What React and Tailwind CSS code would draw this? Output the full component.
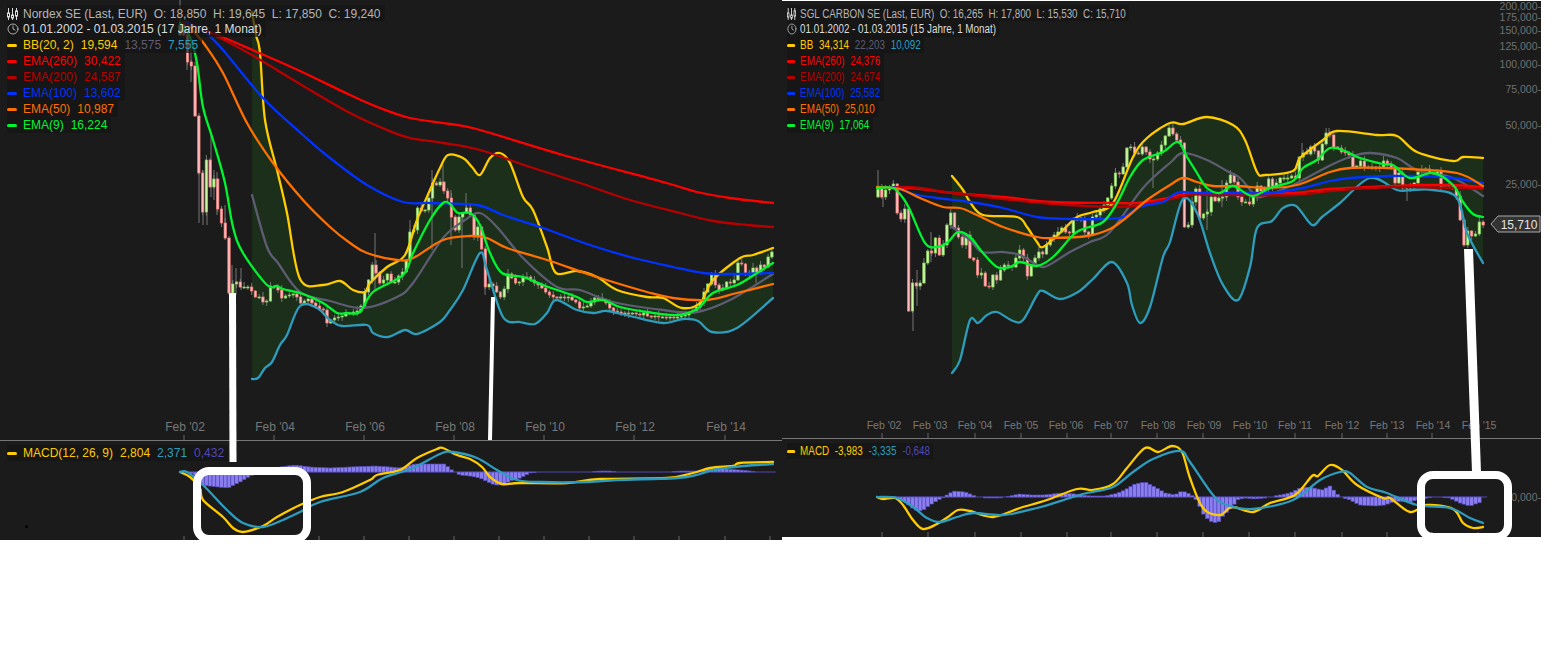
import React from "react";
import { Clock } from "lucide-react";

const YELLOW = "#ffcc00";
const TEAL = "#2e9dbd";
const GRAY = "#5f5b72";
const RED = "#ff0000";
const DARK_RED = "#b80000";
const BLUE = "#0033ff";
const ORANGE = "#ff7000";
const GREEN = "#00f530";

// Nordex, all coordinates are page pixels
const left = {
  upper: [252,12, 256,35, 260,53, 265,120, 277,170, 287,213, 300,279, 323,285, 340,281, 353,290, 365,292, 370,283, 387,267, 405,255, 417,220, 430,190, 440,168, 448,155, 463,158, 472,167, 480,175, 490,158, 500,153, 510,163, 523,197, 533,210, 547,247, 556,273, 577,271, 597,277, 617,290, 647,297, 663,298, 682,308, 700,303, 713,280, 740,258, 753,255, 773,248],
  mid: [252,195, 267,247, 278,263, 300,292, 330,301, 363,308, 397,297, 413,283, 443,238, 465,220, 480,213, 497,227, 523,258, 557,287, 580,290, 613,302, 663,310, 697,312, 730,300, 773,274],
  lower: [252,379, 258,378, 265,368, 272,362, 280,345, 287,335, 300,306, 317,308, 330,320, 342,326, 367,325, 373,333, 388,337, 405,330, 417,334, 440,322, 450,310, 463,290, 480,253, 487,270, 503,317, 520,322, 535,324, 547,313, 556,300, 577,310, 593,313, 607,311, 630,316, 663,323, 683,319, 698,321, 712,332, 737,328, 773,298],
  ema260: [183,22, 220,36, 257,52, 300,71, 350,95, 380,108, 410,118, 450,124, 480,130, 563,155, 663,182, 697,192, 730,198, 773,203],
  ema200: [183,22, 220,38, 257,58, 300,84, 350,113, 387,130, 410,138, 443,143, 480,150, 530,167, 580,183, 630,200, 680,213, 713,221, 747,225, 773,227],
  ema100: [186,22, 205,32, 223,50, 263,98, 303,135, 330,158, 367,185, 403,202, 430,203, 477,205, 503,215, 540,227, 590,245, 630,257, 673,267, 703,273, 730,274, 773,273],
  ema50: [190,27, 205,45, 223,73, 247,123, 273,163, 303,200, 330,227, 350,243, 367,253, 397,260, 413,258, 443,240, 470,236, 487,238, 507,248, 547,260, 597,277, 647,292, 673,298, 707,300, 737,293, 773,284],
  ema9: [180,23, 190,37, 197,63, 203,107, 213,140, 225,183, 233,227, 243,253, 267,285, 277,286, 283,289, 303,294, 323,303, 337,313, 347,313, 360,312, 373,292, 403,275, 413,253, 430,220, 443,203, 450,204, 458,213, 470,213, 480,225, 490,253, 502,273, 523,277, 543,285, 577,297, 587,302, 603,300, 620,307, 647,312, 677,315, 697,309, 713,293, 737,285, 757,273, 773,263],
  closes: [25,35,62,66,116,173,212,160,187,179,209,223,238,293,284,282,287,287,287,291,297,297,302,301,286,287,290,298,296,295,294,297,303,301,299,303,306,309,310,323,320,318,317,316,313,313,312,311,306,292,280,265,273,283,280,274,282,282,276,272,260,232,230,208,211,210,198,183,185,182,191,198,217,230,217,213,208,215,237,227,249,287,284,286,292,297,289,274,278,283,282,277,277,280,283,285,288,292,295,297,298,297,298,297,300,302,308,307,306,302,298,298,300,303,308,311,312,314,313,314,313,314,315,313,316,317,316,317,317,318,317,318,317,316,315,313,311,307,302,292,284,275,285,290,288,282,283,280,263,264,273,273,268,272,265,267,257,252],
  wicks: [[180,0,36],[187,30,70],[191,40,82],[199,113,223],[203,170,225],[207,160,225],[211,135,197],[214,170,200],[217,172,215],[225,205,240],[232,265,300],[236,268,295],[241,268,290],[375,233,290],[410,220,243],[432,170,250],[443,165,190],[451,190,245],[462,213,268],[466,193,210],[485,248,295],[756,268,283]],
  macdFast: [180,472, 190,477, 200,488, 203,500, 223,517, 233,528, 243,532, 263,526, 277,517, 300,505, 320,497, 343,492, 370,480, 377,475, 400,470, 417,458, 437,449, 443,448, 457,455, 470,459, 482,467, 490,477, 502,484, 520,483, 567,483, 600,479, 667,478, 693,473, 710,468, 733,466, 740,463, 773,462],
  macdSlow: [180,472, 187,472, 203,485, 227,510, 243,523, 263,527, 283,520, 300,512, 320,502, 360,492, 383,478, 413,468, 440,454, 453,452, 477,458, 497,470, 517,480, 540,482, 587,482, 617,480, 677,478, 700,474, 713,470, 743,466, 773,464],
  hist: [[180,0],[190,-1],[197,-4],[200,-13],[228,-16],[240,-10],[250,-4],[262,0],[270,3],[280,5],[295,7],[310,5],[330,4],[350,5],[375,6],[390,5],[400,4],[415,8],[445,8],[450,3],[455,0],[460,-3],[470,-4],[480,-6],[490,-11],[495,-13],[503,-13],[510,-9],[520,-6],[530,-1],[540,0],[585,0],[600,1],[610,1],[620,0],[665,0],[680,1],[700,1],[713,4],[725,3],[740,2],[750,1],[760,0],[775,0]],
};

// SGL Carbon
const right = {
  upper: [952,176, 963,190, 970,202, 983,215, 1017,217, 1027,227, 1037,242, 1043,247, 1060,233, 1077,217, 1093,212, 1113,203, 1133,157, 1147,138, 1170,123, 1183,124, 1207,117, 1233,125, 1245,140, 1257,172, 1265,175, 1293,171, 1300,158, 1323,140, 1337,131, 1377,135, 1397,136, 1417,152, 1453,161, 1463,157, 1483,158],
  mid: [952,227, 970,240, 982,252, 1003,252, 1020,255, 1037,265, 1047,266, 1070,252, 1090,242, 1110,232, 1143,188, 1170,163, 1183,153, 1207,160, 1227,171, 1240,178, 1253,193, 1260,197, 1293,185, 1327,167, 1350,157, 1370,153, 1397,158, 1417,170, 1453,178, 1483,196],
  lower: [952,373, 960,360, 970,320, 978,323, 987,315, 997,312, 1013,321, 1023,320, 1037,295, 1043,291, 1060,299, 1078,292, 1093,279, 1112,262, 1127,283, 1132,305, 1140,323, 1150,307, 1163,257, 1170,242, 1183,199, 1197,213, 1210,253, 1223,285, 1238,300, 1250,267, 1257,228, 1272,221, 1283,208, 1296,206, 1312,225, 1322,217, 1340,203, 1370,178, 1397,190, 1410,190, 1433,190, 1457,198, 1467,233, 1483,263],
  ema260: [877,188, 910,188, 953,193, 1003,197, 1053,202, 1117,203, 1137,203, 1163,199, 1187,194, 1213,193, 1253,193, 1293,193, 1330,189, 1370,187, 1420,185, 1453,185, 1483,187],
  ema200: [877,188, 910,187, 953,193, 1003,199, 1053,204, 1117,207, 1147,204, 1190,195, 1213,195, 1293,195, 1330,191, 1370,188, 1420,187, 1483,189],
  ema100: [877,187, 897,188, 913,194, 937,198, 970,202, 1003,208, 1037,217, 1070,219, 1103,219, 1123,217, 1140,207, 1163,202, 1170,197, 1180,192, 1200,193, 1237,193, 1270,193, 1303,188, 1330,181, 1350,178, 1387,176, 1420,176, 1453,178, 1483,183],
  ema50: [877,187, 900,189, 920,198, 943,207, 960,208, 977,215, 1003,227, 1037,237, 1053,238, 1087,236, 1110,229, 1127,217, 1147,200, 1170,185, 1183,178, 1197,182, 1213,186, 1237,186, 1267,188, 1297,185, 1330,172, 1350,168, 1387,168, 1410,169, 1457,173, 1483,186],
  ema9: [877,188, 893,188, 903,198, 910,210, 925,243, 937,247, 948,242, 958,232, 970,237, 983,253, 997,267, 1010,267, 1020,262, 1037,266, 1053,257, 1073,235, 1083,229, 1103,222, 1117,203, 1130,177, 1143,160, 1163,152, 1178,142, 1187,157, 1197,173, 1207,188, 1220,193, 1233,186, 1252,196, 1270,188, 1293,181, 1303,168, 1317,160, 1330,148, 1345,151, 1360,158, 1383,164, 1393,165, 1410,178, 1433,173, 1453,185, 1463,202, 1473,214, 1483,217],
  closes: [187,197,190,187,184,213,219,209,311,283,286,283,263,251,253,238,255,245,225,213,228,237,245,235,258,260,275,273,286,287,275,280,270,265,266,267,258,250,258,276,265,258,252,254,245,239,235,232,228,232,233,220,218,220,232,235,217,215,209,205,198,186,173,174,167,148,147,153,154,147,152,159,159,153,145,136,128,134,140,143,227,225,202,189,218,214,212,197,201,198,197,183,175,182,197,202,202,204,197,186,191,189,179,187,183,178,178,178,176,178,157,153,154,147,151,160,144,133,135,147,148,152,153,155,167,166,161,167,168,167,168,167,161,165,167,183,173,188,187,188,183,172,170,169,173,174,172,188,187,187,187,196,220,245,231,236,234,222,225],
  wicks: [[878,170,193],[883,197,207],[913,283,331],[917,270,306],[931,232,262],[1153,160,188],[1207,190,230],[1222,180,207],[1302,143,157],[1329,128,137],[1407,187,201]],
  macdFast: [877,497, 883,499, 895,498, 903,505, 913,520, 923,529, 937,524, 948,517, 958,510, 970,511, 993,517, 1020,508, 1047,500, 1077,489, 1093,490, 1113,484, 1127,468, 1145,448, 1158,452, 1172,446, 1182,452, 1190,478, 1203,508, 1220,515, 1232,507, 1253,512, 1270,503, 1295,495, 1312,476, 1318,476, 1330,465, 1342,470, 1357,485, 1383,498, 1390,498, 1410,512, 1427,505, 1453,509, 1463,523, 1473,528, 1483,527],
  macdSlow: [877,497, 897,498, 913,507, 927,518, 940,522, 957,517, 973,513, 1003,515, 1037,508, 1070,498, 1087,493, 1113,487, 1133,472, 1153,459, 1180,451, 1190,462, 1213,495, 1227,505, 1253,509, 1293,500, 1320,480, 1340,472, 1350,473, 1367,487, 1387,493, 1417,505, 1450,508, 1470,518, 1483,523],
  hist: [[877,0],[895,0],[900,-3],[905,-5],[915,-13],[922,-14],[930,-8],[940,-2],[945,0],[948,3],[955,6],[965,5],[975,1],[985,-1],[1000,-1],[1010,1],[1020,3],[1030,2],[1045,2],[1060,4],[1075,3],[1090,1],[1105,1],[1115,3],[1125,7],[1135,13],[1145,15],[1155,10],[1165,4],[1175,2],[1182,6],[1190,3],[1195,-1],[1200,-10],[1205,-20],[1212,-25],[1218,-26],[1222,-20],[1228,-14],[1233,-9],[1237,-3],[1245,-1],[1255,-2],[1265,-1],[1275,1],[1290,4],[1300,9],[1310,10],[1322,7],[1330,11],[1340,0],[1350,-3],[1360,-8],[1375,-9],[1385,-8],[1395,-4],[1410,-5],[1420,-2],[1435,0],[1450,-1],[1460,-6],[1470,-9],[1478,-6],[1483,-5]],
};

const reversePairs = (flat) => {
  const out = [];
  for (let i = flat.length - 2; i >= 0; i -= 2) out.push(flat[i], flat[i + 1]);
  return out;
};

// catmull-rom through the traced points, so the curves don't look polygonal
const smoothPath = (flat, moveTo = true) => {
  const pts = [];
  for (let i = 0; i < flat.length; i += 2) pts.push([flat[i], flat[i + 1]]);
  let d = moveTo ? `M${pts[0][0]} ${pts[0][1]}` : `L${pts[0][0]} ${pts[0][1]}`;
  for (let i = 0; i < pts.length - 1; i++) {
    const p0 = pts[i - 1] || pts[i];
    const p1 = pts[i];
    const p2 = pts[i + 1];
    const p3 = pts[i + 2] || p2;
    const c1x = p1[0] + (p2[0] - p0[0]) / 6;
    const c1y = p1[1] + (p2[1] - p0[1]) / 6;
    const c2x = p2[0] - (p3[0] - p1[0]) / 6;
    const c2y = p2[1] - (p3[1] - p1[1]) / 6;
    d += ` C${c1x.toFixed(1)} ${c1y.toFixed(1)} ${c2x.toFixed(1)} ${c2y.toFixed(1)} ${p2[0]} ${p2[1]}`;
  }
  return d;
};

const interp = (anchors, x) => {
  for (let i = 1; i < anchors.length; i++) {
    if (x <= anchors[i][0]) {
      const [x0, y0] = anchors[i - 1];
      const [x1, y1] = anchors[i];
      return y0 + ((y1 - y0) * (x - x0)) / (x1 - x0);
    }
  }
  return 0;
};

const Line = ({ data, color, width = 2.3 }) => (
  <path d={smoothPath(data)} fill="none" stroke={color} strokeWidth={width} strokeLinejoin="round" strokeLinecap="round" />
);

const Candles = ({ closes, wicks, start, step }) => (
  <g>
    {wicks.map(([x, y1, y2]) => (
      <line key={`${x}-${y1}`} x1={x} x2={x} y1={y1} y2={y2} stroke="#777" />
    ))}
    {closes.map((close, i) => {
      const x = start + step * i;
      const open = i === 0 ? close + 10 : closes[i - 1];
      const top = Math.min(open, close);
      const bottom = Math.max(open, close);
      const up = close <= open;
      return (
        <g key={i}>
          <line x1={x} x2={x} y1={top - 1 - ((i * 37) % 5)} y2={bottom + 1 + ((i * 53) % 4)} stroke="#777" />
          <rect
            x={x - 1.2}
            y={top}
            width={2.4}
            height={Math.max(bottom - top, 1)}
            fill={up ? "#c8f7a4" : "#ffbcbc"}
            stroke={up ? "#86cf5c" : "#f07878"}
            strokeWidth={0.7}
          />
        </g>
      );
    })}
  </g>
);

const CandleIcon = () => (
  <svg width="11" height="12" viewBox="0 0 11 12" fill="none" stroke="#ddd" strokeWidth="1">
    <path d="M1.5 0v12M5.5 0v12M9.5 0v12" />
    <rect x="0.5" y="5" width="2" height="4" fill="#1b1b1b" />
    <rect x="4.5" y="7" width="2" height="3" fill="#1b1b1b" />
    <rect x="8.5" y="3" width="2" height="5" fill="#1b1b1b" />
  </svg>
);

const Row = ({ color, values }) => (
  <div className="flex h-4 w-fit items-center gap-[7px] bg-[#141414]/70 pr-1 text-[12px] leading-4">
    <span className="mr-[-1px] h-[3px] w-[10px] rounded-sm" style={{ backgroundColor: color }} />
    {values.map(([text, c]) => (
      <span key={text} className="whitespace-pre" style={{ color: c }}>
        {text}
      </span>
    ))}
  </div>
);

const Legend = ({ title, range, rows, className }) => (
  <div className={`absolute flex flex-col ${className}`}>
    <div className="flex h-4 w-fit items-center gap-[5px] bg-[#141414]/70 pr-1 pt-[2px] text-[12px] text-[#b5b5b5]">
      <CandleIcon />
      <span className="whitespace-pre">{title}</span>
    </div>
    <div className="flex h-4 w-fit items-center gap-[4px] bg-[#141414]/70 pr-1 text-[12px] text-[#dddddd]">
      <Clock size={12} strokeWidth={1.5} />
      <span className="whitespace-pre">{range}</span>
    </div>
    {rows.map((row) => (
      <Row
        key={row.name}
        color={row.color}
        values={[[row.name, row.color], ...row.values.map((v, i) => [v, row.colors ? row.colors[i] : row.color])]}
      />
    ))}
  </div>
);

const AxisLabels = ({ labels, y, className }) =>
  labels.map(([text, x]) => (
    <text key={text} x={x} y={y} textAnchor="middle" className={`fill-[#777777] ${className}`}>
      {text}
    </text>
  ));

const Ticks = ({ xs, y1, y2 }) => xs.map((x) => <line key={x} x1={x} x2={x} y1={y1} y2={y2} stroke="#666" />);

const MainChart = ({ data, start, step }) => (
  <g>
    <path d={`${smoothPath(data.upper)} ${smoothPath(reversePairs(data.lower), false)} Z`} fill="#1b2f1a" />
    <Candles closes={data.closes} wicks={data.wicks} start={start} step={step} />
    <Line data={data.mid} color={GRAY} />
    <Line data={data.lower} color={TEAL} />
    <Line data={data.upper} color={YELLOW} />
    <Line data={data.ema260} color={RED} />
    <Line data={data.ema200} color={DARK_RED} />
    <Line data={data.ema100} color={BLUE} />
    <Line data={data.ema50} color={ORANGE} />
    <Line data={data.ema9} color={GREEN} />
  </g>
);

const MacdChart = ({ data, start, step, count, base }) => (
  <g>
    <line x1={start} x2={start + step * count} y1={base} y2={base} stroke="#5148b5" />
    {Array.from({ length: count }, (_, i) => {
      const x = start + step * i;
      const v = interp(data.hist, x);
      if (Math.abs(v) < 0.5) return null;
      return (
        <rect
          key={i}
          x={x - step / 2}
          y={v > 0 ? base - v : base}
          width={step}
          height={Math.abs(v)}
          fill="#8a7df0"
          stroke="#5148b5"
          strokeWidth={0.6}
        />
      );
    })}
    <Line data={data.macdFast} color={YELLOW} />
    <Line data={data.macdSlow} color={TEAL} />
  </g>
);

const leftRows = [
  { name: "BB(20, 2)", color: YELLOW, values: ["19,594", "13,575", "7,555"], colors: [YELLOW, GRAY, TEAL] },
  { name: "EMA(260)", color: RED, values: ["30,422"] },
  { name: "EMA(200)", color: DARK_RED, values: ["24,587"] },
  { name: "EMA(100)", color: BLUE, values: ["13,602"] },
  { name: "EMA(50)", color: ORANGE, values: ["10,987"] },
  { name: "EMA(9)", color: GREEN, values: ["16,224"] },
];

const rightRows = [
  { name: "BB", color: YELLOW, values: ["34,314", "22,203", "10,092"], colors: [YELLOW, GRAY, TEAL] },
  { name: "EMA(260)", color: RED, values: ["24,376"] },
  { name: "EMA(200)", color: DARK_RED, values: ["24,674"] },
  { name: "EMA(100)", color: BLUE, values: ["25,582"] },
  { name: "EMA(50)", color: ORANGE, values: ["25,010"] },
  { name: "EMA(9)", color: GREEN, values: ["17,064"] },
];

const prices = [
  ["200,000-", 10],
  ["175,000-", 21],
  ["150,000-", 34],
  ["125,000-", 50],
  ["100,000-", 68],
  ["75,000-", 93],
  ["50,000-", 129],
  ["25,000-", 188],
];

const App = () => {
  return (
    <div className="flex h-[645px] w-[1564px] items-start overflow-hidden bg-white font-['Liberation_Sans',sans-serif]">
      {/* Nordex */}
      <div className="relative h-[540px] w-[782px] overflow-hidden bg-[#1b1b1b]">
        <div className="relative h-[440px]">
          <svg width="782" height="440" viewBox="0 0 782 440" className="block">
            <MainChart data={left} start={180} step={3.77} />
            <AxisLabels
              y={431}
              className="text-[12px]"
              labels={[["Feb '02", 185], ["Feb '04", 275], ["Feb '06", 365], ["Feb '08", 455], ["Feb '10", 545], ["Feb '12", 635], ["Feb '14", 726]]}
            />
            <Ticks xs={[184, 274, 364, 454, 544, 634, 725]} y1={435} y2={440} />
          </svg>
          <Legend
            className="left-[7px] top-[5px]"
            title="Nordex SE (Last, EUR)  O: 18,850  H: 19,645  L: 17,850  C: 19,240"
            range="01.01.2002 - 01.03.2015 (17 Jahre, 1 Monat)"
            rows={leftRows}
          />
        </div>
        <div className="relative h-[100px] border-t border-[#777777]">
          <svg width="782" height="99" viewBox="0 441 782 99" className="block">
            <MacdChart data={left} start={180} step={3.77} count={158} base={472} />
            <Ticks xs={[184, 229, 274, 319, 364, 409, 454, 499, 544, 589, 634, 679, 725, 770]} y1={536} y2={540} />
            <circle cx="26.5" cy="526.5" r="1.5" fill="#000" />
          </svg>
          <div className="absolute left-[7px] top-[4px]">
            <Row color={YELLOW} values={[["MACD(12, 26, 9)", YELLOW], ["2,804", YELLOW], ["2,371", TEAL], ["0,432", "#5148b5"]]} />
          </div>
        </div>
        <svg width="782" height="540" viewBox="0 0 782 540" className="absolute inset-0">
          <polygon points="229,293 236,293 236.5,462 229.5,462" fill="#fff" />
          <polygon points="491,297 495,297 492,440 488,440" fill="#fff" />
          <rect x="197" y="471" width="110" height="68" rx="12" fill="none" stroke="#fff" strokeWidth="8" />
        </svg>
      </div>

      {/* SGL Carbon: this half of the picture is squeezed sideways */}
      <div className="relative mt-px h-[536px] w-[759px] overflow-hidden bg-[#1b1b1b]">
        <div className="relative h-[437px]">
          <svg width="759" height="437" viewBox="782 1 759 437" className="block">
            <MainChart data={right} start={878} step={3.83} />
            <AxisLabels
              y={429}
              className="text-[10.5px]"
              labels={[["Feb '02", 884], ["Feb '03", 930], ["Feb '04", 975], ["Feb '05", 1021], ["Feb '06", 1066], ["Feb '07", 1111], ["Feb '08", 1158], ["Feb '09", 1204], ["Feb '10", 1250], ["Feb '11", 1295], ["Feb '12", 1342], ["Feb '13", 1387], ["Feb '14", 1433], ["Feb '15", 1479]]}
            />
            <Ticks xs={[882, 928, 975, 1021, 1067, 1111, 1157, 1203, 1249, 1295, 1342, 1387, 1432, 1478]} y1={433} y2={438} />
            {prices.map(([text, y]) => (
              <text key={text} x="1541" y={y} textAnchor="end" className="fill-[#707070] text-[10.5px]">
                {text}
              </text>
            ))}
            <polygon points="1491,224 1498,216 1540,216 1540,232 1498,232" fill="#333" stroke="#aaa" />
            <text x="1519" y="228.5" textAnchor="middle" className="fill-[#e5e5e5] text-[12px]">
              15,710
            </text>
          </svg>
          <Legend
            className="left-[5px] top-[4px] origin-top-left scale-x-[0.82]"
            title="SGL CARBON SE (Last, EUR)  O: 16,265  H: 17,800  L: 15,530  C: 15,710"
            range="01.01.2002 - 01.03.2015 (15 Jahre, 1 Monat)"
            rows={rightRows}
          />
        </div>
        <div className="relative h-[99px] border-t border-[#777777]">
          <svg width="759" height="98" viewBox="782 439 759 98" className="block">
            <MacdChart data={right} start={878} step={3.83} count={159} base={497} />
            <Ticks xs={[882, 928, 975, 1021, 1067, 1111, 1157, 1203, 1249, 1295, 1342, 1387, 1432, 1478]} y1={532} y2={537} />
            <text x="1541" y="501" textAnchor="end" className="fill-[#707070] text-[10.5px]">
              0,000-
            </text>
          </svg>
          <div className="absolute left-[5px] top-[4px] origin-top-left scale-x-[0.82]">
            <Row color={YELLOW} values={[["MACD", YELLOW], ["-3,983", YELLOW], ["-3,335", TEAL], ["-0,648", "#5148b5"]]} />
          </div>
        </div>
        <svg width="759" height="536" viewBox="782 1 759 536" className="absolute inset-0">
          <polygon points="1464,249 1473,249 1481,472 1472,472" fill="#fff" />
          <rect x="1421" y="475" width="87" height="62" rx="12" fill="none" stroke="#fff" strokeWidth="8" />
        </svg>
      </div>
    </div>
  );
};

export default App;
